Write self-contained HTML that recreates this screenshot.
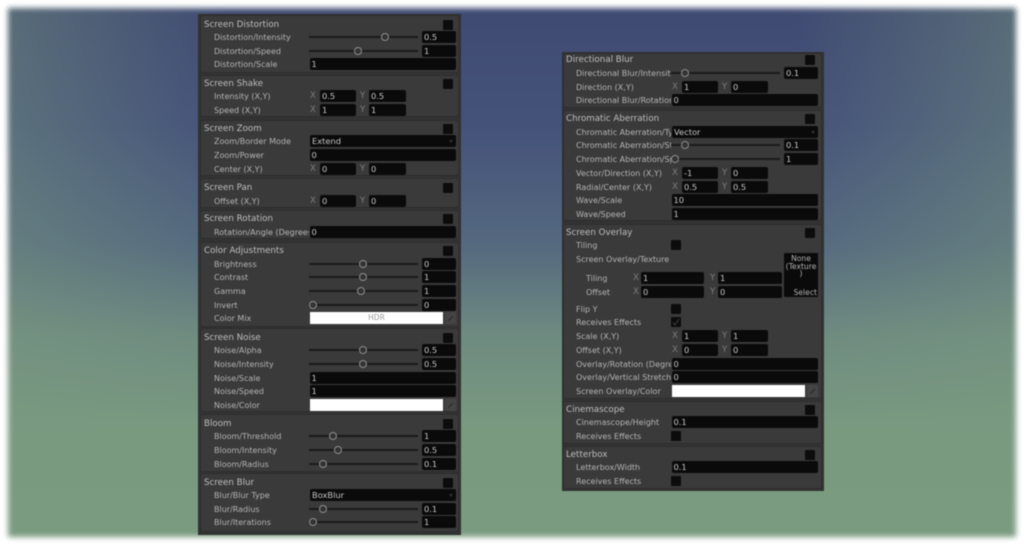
<!DOCTYPE html>
<html><head><meta charset="utf-8"><style>
html,body{margin:0;padding:0;width:1024px;height:544px;overflow:hidden;background:#fff}
#bg{position:absolute;left:8px;top:8px;width:1008px;height:529px;filter:blur(3px);background:linear-gradient(to right,rgba(122,154,128,.42) 0,rgba(122,154,128,0) 22%,rgba(122,154,128,0) 78%,rgba(122,154,128,.42) 100%),linear-gradient(to bottom,#3f4a72 0,#44527a 22%,#55697f 45%,#6e8b80 62%,#7a9a80 80%,#7b9b80 100%)}
#ui{position:absolute;left:0;top:0;width:1024px;height:544px;filter:blur(.5px);font-family:"DejaVu Sans","Liberation Sans",sans-serif}
.A,.B{position:absolute;top:0;width:1024px;height:544px}
.A{left:0}.B{left:362px}
.P{position:absolute;left:198px;width:263px;background:#323232}
.B .P{left:200px;width:262px}
.S{position:absolute;left:200px;width:259px;background:#3a3a3a;border:1px solid #2e2e2e;border-radius:3px;box-sizing:border-box}
.B .S{left:201px;width:259px}
.r{position:absolute;left:0;width:1024px;height:12px;line-height:12px;font-size:8px;color:#b4b4b4;white-space:nowrap}
.r>*{position:absolute;top:0;height:12px;display:block;font-style:normal;text-decoration:none;font-weight:normal}
.T{left:204px;font-size:8.7px;color:#bdbdbd;top:1px!important}
.l,.o{top:1px!important}
.l{left:214px;width:95px;overflow:hidden}
.b{left:443px;top:0;width:10px;height:10px!important;background:#0c0c0c;border-radius:1px}
.g{left:309px;width:10px;height:10px!important;top:1px!important;background:#0c0c0c;border-radius:1px}
.k{left:309px;width:109px;height:2px!important;top:5px!important;background:#1a1a1a}
.h{width:6px;height:6px!important;top:2px!important;margin-left:-4px;border:1px solid #8e8e8e;border-radius:50%;background:#333}
.v,.f,.x,.y,.d{background:#0a0a0a;color:#c4c4c4;border-radius:2px;padding-left:2px;box-sizing:border-box;line-height:13px;font-size:8.3px}
.v{left:422px;width:34px}
.f{left:309.5px;width:146.5px}
.d{left:309.5px;width:146.5px;padding-left:2.5px;line-height:12px}
.d:after{content:"";position:absolute;right:3px;top:5px;border:2.5px solid transparent;border-top:3px solid #333}
.x{left:320px;width:36px}
.y{left:369px;width:37px}
.xl,.yl{color:#7c7c7c;font-size:8.6px}
.xl{left:310px}
.yl{left:360px}
.c{left:310px;width:133px;background:#fff;text-align:center;color:#9a9a9a;font-size:7.5px}
.p{left:445px;width:11px;background:#444;border-radius:1px}
.p:after{content:"";position:absolute;left:2px;top:5.5px;width:7px;height:1px;background:#2a2a2a;transform:rotate(-45deg)}
</style></head><body>
<div id="bg"></div>
<div id="ui">
<div class="A">
<div class="P" style="top:14px;height:521px"></div>
<div class="S" style="top:15px;height:58px"></div>
<div class="S" style="top:75px;height:42px"></div>
<div class="S" style="top:120px;height:56px"></div>
<div class="S" style="top:178px;height:30px"></div>
<div class="S" style="top:210px;height:29px"></div>
<div class="S" style="top:242px;height:85px"></div>
<div class="S" style="top:328px;height:84px"></div>
<div class="S" style="top:414px;height:58px"></div>
<div class="S" style="top:473px;height:59px"></div>

<div class="r" style="top:18px"><span class="T">Screen Distortion</span><span class="b" style="top:2px"></span></div>
<div class="r" style="top:31px"><span class="l">Distortion/Intensity</span><i class="k"></i><i class="h" style="left:385px"></i><span class="v">0.5</span></div>
<div class="r" style="top:45px"><span class="l">Distortion/Speed</span><i class="k"></i><i class="h" style="left:358px"></i><span class="v">1</span></div>
<div class="r" style="top:58px"><span class="l">Distortion/Scale</span><span class="f">1</span></div>

<div class="r" style="top:77px"><span class="T">Screen Shake</span><span class="b" style="top:2px"></span></div>
<div class="r" style="top:90px"><span class="l">Intensity (X,Y)</span><span class="xl">X</span><span class="x">0.5</span><span class="yl">Y</span><span class="y">0.5</span></div>
<div class="r" style="top:104px"><span class="l">Speed (X,Y)</span><span class="xl">X</span><span class="x">1</span><span class="yl">Y</span><span class="y">1</span></div>

<div class="r" style="top:122px"><span class="T">Screen Zoom</span><span class="b" style="top:2px"></span></div>
<div class="r" style="top:135px"><span class="l">Zoom/Border Mode</span><span class="d">Extend</span></div>
<div class="r" style="top:149px"><span class="l">Zoom/Power</span><span class="f">0</span></div>
<div class="r" style="top:163px"><span class="l">Center (X,Y)</span><span class="xl">X</span><span class="x">0</span><span class="yl">Y</span><span class="y">0</span></div>

<div class="r" style="top:181px"><span class="T">Screen Pan</span><span class="b" style="top:2px"></span></div>
<div class="r" style="top:195px"><span class="l">Offset (X,Y)</span><span class="xl">X</span><span class="x">0</span><span class="yl">Y</span><span class="y">0</span></div>

<div class="r" style="top:212px"><span class="T">Screen Rotation</span><span class="b" style="top:2px"></span></div>
<div class="r" style="top:226px"><span class="l">Rotation/Angle (Degrees)</span><span class="f">0</span></div>

<div class="r" style="top:244px"><span class="T">Color Adjustments</span><span class="b" style="top:2px"></span></div>
<div class="r" style="top:258px"><span class="l">Brightness</span><i class="k"></i><i class="h" style="left:363px"></i><span class="v">0</span></div>
<div class="r" style="top:271px"><span class="l">Contrast</span><i class="k"></i><i class="h" style="left:363px"></i><span class="v">1</span></div>
<div class="r" style="top:285px"><span class="l">Gamma</span><i class="k"></i><i class="h" style="left:361px"></i><span class="v">1</span></div>
<div class="r" style="top:299px"><span class="l">Invert</span><i class="k"></i><i class="h" style="left:313px"></i><span class="v">0</span></div>
<div class="r" style="top:312px"><span class="l">Color Mix</span><span class="c">HDR</span><span class="p"></span></div>

<div class="r" style="top:331px"><span class="T">Screen Noise</span><span class="b" style="top:2px"></span></div>
<div class="r" style="top:344px"><span class="l">Noise/Alpha</span><i class="k"></i><i class="h" style="left:363px"></i><span class="v">0.5</span></div>
<div class="r" style="top:358px"><span class="l">Noise/Intensity</span><i class="k"></i><i class="h" style="left:363px"></i><span class="v">0.5</span></div>
<div class="r" style="top:372px"><span class="l">Noise/Scale</span><span class="f">1</span></div>
<div class="r" style="top:385px"><span class="l">Noise/Speed</span><span class="f">1</span></div>
<div class="r" style="top:399px"><span class="l">Noise/Color</span><span class="c"></span><span class="p"></span></div>

<div class="r" style="top:417px"><span class="T">Bloom</span><span class="b" style="top:2px"></span></div>
<div class="r" style="top:430px"><span class="l">Bloom/Threshold</span><i class="k"></i><i class="h" style="left:333px"></i><span class="v">1</span></div>
<div class="r" style="top:444px"><span class="l">Bloom/Intensity</span><i class="k"></i><i class="h" style="left:338px"></i><span class="v">0.5</span></div>
<div class="r" style="top:458px"><span class="l">Bloom/Radius</span><i class="k"></i><i class="h" style="left:323px"></i><span class="v">0.1</span></div>

<div class="r" style="top:476px"><span class="T">Screen Blur</span><span class="b" style="top:2px"></span></div>
<div class="r" style="top:489px"><span class="l">Blur/Blur Type</span><span class="d">BoxBlur</span></div>
<div class="r" style="top:503px"><span class="l">Blur/Radius</span><i class="k"></i><i class="h" style="left:323px"></i><span class="v">0.1</span></div>
<div class="r" style="top:516px"><span class="l">Blur/Iterations</span><i class="k"></i><i class="h" style="left:313px"></i><span class="v">1</span></div>
</div>

<div class="B">
<div class="P" style="top:52px;height:439px"></div>
<div class="S" style="top:53px;height:55px"></div>
<div class="S" style="top:110px;height:111px"></div>
<div class="S" style="top:224px;height:175px"></div>
<div class="S" style="top:401px;height:43px"></div>
<div class="S" style="top:446px;height:43px"></div>

<div class="r" style="top:53px"><span class="T">Directional Blur</span><span class="b" style="top:2px"></span></div>
<div class="r" style="top:67px"><span class="l">Directional Blur/Intensity</span><i class="k"></i><i class="h" style="left:323px"></i><span class="v">0.1</span></div>
<div class="r" style="top:81px"><span class="l">Direction (X,Y)</span><span class="xl">X</span><span class="x">1</span><span class="yl">Y</span><span class="y">0</span></div>
<div class="r" style="top:94px"><span class="l">Directional Blur/Rotation</span><span class="f">0</span></div>

<div class="r" style="top:112px"><span class="T">Chromatic Aberration</span><span class="b" style="top:2px"></span></div>
<div class="r" style="top:126px"><span class="l">Chromatic Aberration/Type</span><span class="d">Vector</span></div>
<div class="r" style="top:139px"><span class="l">Chromatic Aberration/Strength</span><i class="k"></i><i class="h" style="left:323px"></i><span class="v">0.1</span></div>
<div class="r" style="top:153px"><span class="l">Chromatic Aberration/Speed</span><i class="k"></i><i class="h" style="left:313px"></i><span class="v">1</span></div>
<div class="r" style="top:167px"><span class="l">Vector/Direction (X,Y)</span><span class="xl">X</span><span class="x">-1</span><span class="yl">Y</span><span class="y">0</span></div>
<div class="r" style="top:181px"><span class="l">Radial/Center (X,Y)</span><span class="xl">X</span><span class="x">0.5</span><span class="yl">Y</span><span class="y">0.5</span></div>
<div class="r" style="top:194px"><span class="l">Wave/Scale</span><span class="f">10</span></div>
<div class="r" style="top:208px"><span class="l">Wave/Speed</span><span class="f">1</span></div>

<div class="r" style="top:226px"><span class="T">Screen Overlay</span><span class="b" style="top:2px"></span></div>
<div class="r" style="top:239px"><span class="l">Tiling</span><span class="g"></span></div>
<div class="r" style="top:253px"><span class="l" style="width:130px">Screen Overlay/Texture</span></div>
<div class="r" style="top:272px"><span class="o" style="left:224px">Tiling</span><span class="xl" style="left:271px">X</span><span class="x" style="left:279px;width:63px">1</span><span class="yl" style="left:348px">Y</span><span class="y" style="left:356px;width:64px">1</span></div>
<div class="r" style="top:286px"><span class="o" style="left:224px">Offset</span><span class="xl" style="left:271px">X</span><span class="x" style="left:279px;width:63px">0</span><span class="yl" style="left:348px">Y</span><span class="y" style="left:356px;width:64px">0</span></div>
<div class="r" style="top:253px;height:44px"><span style="left:422px;width:34px;height:44px;background:#0a0a0a;border-radius:1px;text-align:center;line-height:7.5px;font-size:7.6px;padding-top:2px;box-sizing:border-box;white-space:normal;word-break:break-all">None<br>(Texture<br>)<span style="position:absolute;right:1px;bottom:-1px;line-height:10px">Select</span></span></div>
<div class="r" style="top:303px"><span class="l">Flip Y</span><span class="g"></span></div>
<div class="r" style="top:316px"><span class="l">Receives Effects</span><span class="g"></span><svg style="position:absolute;left:310px;top:2px;width:8px;height:8px" viewBox="0 0 8 8"><path d="M1 4.5 3 7 7 1" fill="none" stroke="#333" stroke-width="1.3"/></svg></div>
<div class="r" style="top:330px"><span class="l">Scale (X,Y)</span><span class="xl">X</span><span class="x">1</span><span class="yl">Y</span><span class="y">1</span></div>
<div class="r" style="top:344px"><span class="l">Offset (X,Y)</span><span class="xl">X</span><span class="x">0</span><span class="yl">Y</span><span class="y">0</span></div>
<div class="r" style="top:358px"><span class="l">Overlay/Rotation (Degrees)</span><span class="f">0</span></div>
<div class="r" style="top:371px"><span class="l">Overlay/Vertical Stretch</span><span class="f">0</span></div>
<div class="r" style="top:385px"><span class="l">Screen Overlay/Color</span><span class="c"></span><span class="p"></span></div>

<div class="r" style="top:403px"><span class="T">Cinemascope</span><span class="b" style="top:2px"></span></div>
<div class="r" style="top:416px"><span class="l">Cinemascope/Height</span><span class="f">0.1</span></div>
<div class="r" style="top:430px"><span class="l">Receives Effects</span><span class="g"></span></div>

<div class="r" style="top:448px"><span class="T">Letterbox</span><span class="b" style="top:2px"></span></div>
<div class="r" style="top:461px"><span class="l">Letterbox/Width</span><span class="f">0.1</span></div>
<div class="r" style="top:475px"><span class="l">Receives Effects</span><span class="g"></span></div>
</div>
</div>
</body></html>
